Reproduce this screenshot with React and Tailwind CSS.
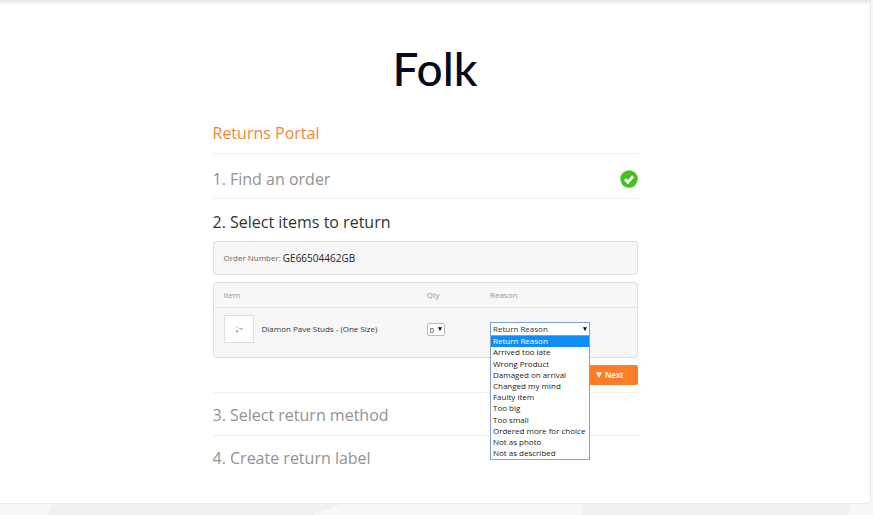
import React, { useState } from 'react';

const reasons = [
  'Return Reason',
  'Arrived too late',
  'Wrong Product',
  'Damaged on arrival',
  'Changed my mind',
  'Faulty item',
  'Too big',
  'Too small',
  'Ordered more for choice',
  'Not as photo',
  'Not as described',
];

function Caret({ className }) {
  return (
    <svg viewBox="0 0 6 6" className={className} aria-hidden="true">
      <path d="M0 0.3h6L3 6z" fill="currentColor" />
    </svg>
  );
}

function ReasonPicker() {
  const [reason, setReason] = useState(reasons[0]);
  return (
    <div className="relative w-[100px]">
      <select
        aria-label="Reason"
        value={reason}
        onChange={(e) => setReason(e.target.value)}
        className="block h-[14px] w-full appearance-none border border-[#7f9fdc] bg-white pl-[2px] text-[8px] leading-[12px] text-[#333]"
      >
        {reasons.map((r) => (
          <option key={r}>{r}</option>
        ))}
      </select>
      <Caret className="pointer-events-none absolute right-[3px] top-[5px] size-[4px] text-black" />
      <ul
        role="listbox"
        aria-label="Return reasons"
        className="absolute left-0 top-full z-10 grid h-[124px] w-full auto-rows-fr border border-t-0 border-[#8f9fc8] bg-white text-[8px] leading-[10px] text-[#222]"
      >
        {reasons.map((r) => (
          <li
            key={r}
            role="option"
            aria-selected={r === reason}
            onClick={() => setReason(r)}
            className="whitespace-nowrap pl-[2px] aria-selected:bg-[#0c8dfa] aria-selected:text-white"
          >
            {r}
          </li>
        ))}
      </ul>
    </div>
  );
}

export default function App() {
  return (
    <div className="min-h-screen bg-[#f8f8f8] font-['Open_Sans','Noto_Sans',sans-serif]">
      <main className="mr-[2px] rounded-br-sm border-b border-r border-[#ebebeb] bg-white">
        <div className="h-[5px] bg-gradient-to-b from-[#e6e6e6] to-white" />
        <header className="flex h-[108px] justify-center pt-8">
          <h1 className="font-['Lato','Open_Sans',sans-serif] text-[46px] font-medium leading-[64px] text-[#050a1c]">
            Folk
          </h1>
        </header>
        <div className="mx-auto w-full max-w-[445px] pb-[33px] pr-5 text-[16px] text-[#929292]">
          <h2 className="border-b border-[#f0f0f0] pb-2 pt-2 leading-6 text-[#f58634]">Returns Portal</h2>
          <section className="flex h-[45px] items-center justify-between border-b border-[#f0f0f0] pt-[6px]">
            <h3>1. Find an order</h3>
            <svg viewBox="0 0 18 18" className="size-[18px]" role="img" aria-label="Completed">
              <circle cx="9" cy="9" r="8.7" fill="#46c01f" />
              <path d="M5 9.2l2.8 2.9 5.4-5.8" fill="none" stroke="#fff" strokeWidth="2.8" />
            </svg>
          </section>
          <section className="border-b border-[#f0f0f0] pb-[7px] pt-[11px]">
            <h3 className="leading-6 text-[#333]">2. Select items to return</h3>
            <p className="mt-[7px] flex h-[34px] items-center gap-[2px] rounded-[3px] border border-[#dedede] bg-[#f7f7f7] pl-[10px] text-[8px] text-[#666]">
              Order Number: <strong className="text-[10px] font-normal text-[#222]">GE66504462GB</strong>
            </p>
            <div className="mt-[7px] rounded-[3px] border border-[#dedede] bg-[#f7f7f7]">
              <table className="w-full table-fixed text-left text-[8px] text-[#999]">
                <thead>
                  <tr className="h-[24px] border-b border-[#e2e2e2]">
                    <th className="w-[48%] pl-[10px] font-normal">Item</th>
                    <th className="w-[15%] pl-[10px] font-normal">Qty</th>
                    <th className="pl-[10px] font-normal">Reason</th>
                  </tr>
                </thead>
                <tbody>
                  <tr className="h-[50px]">
                    <td className="pb-[6px] pl-[10px] pt-0">
                      <div className="flex items-center gap-2">
                        <svg viewBox="0 0 30 28" className="h-[28px] w-[30px] border border-[#ddd] bg-white" role="img" aria-label="Diamond pave studs">
                          <path d="M11.5 11.5l2 .8M14.5 12.8l1.5.7" stroke="#bbb" strokeWidth="1" />
                          <path d="M16.5 14h2M12 16.5h2" stroke="#888" strokeWidth="1.8" />
                        </svg>
                        <span className="text-[#333]">Diamon Pave Studs - (One Size)</span>
                      </div>
                    </td>
                    <td className="pb-[6px] pl-[10px] pt-0">
                      <div className="relative w-[18px]">
                        <select
                          aria-label="Quantity"
                          className="block h-[13px] w-full appearance-none rounded-[2px] border border-[#bbb] bg-white pl-[2px] text-[8px] leading-[11px] text-[#333]"
                        >
                          <option>0</option>
                          <option>1</option>
                        </select>
                        <Caret className="pointer-events-none absolute right-[3px] top-[4px] size-[4px] text-black" />
                      </div>
                    </td>
                    <td className="pb-[6px] pl-[10px] pt-0">
                      <ReasonPicker />
                    </td>
                  </tr>
                </tbody>
              </table>
            </div>
            <div className="mt-[7px] flex justify-end">
              <button type="button" className="flex h-5 w-[60px] items-center justify-end gap-[3px] rounded-[2px] bg-[#fb7d27] pr-[14px] text-[8px] font-semibold text-white">
                <Caret className="size-[6px]" />
                Next
              </button>
            </div>
          </section>
          <section className="border-b border-[#f0f0f0] pb-2 pt-[10px]">
            <h3 className="leading-6">3. Select return method</h3>
          </section>
          <section className="pt-[10px]">
            <h3 className="leading-6">4. Create return label</h3>
          </section>
        </div>
      </main>
      <svg viewBox="0 0 873 12" preserveAspectRatio="none" className="block h-[12px] w-full" aria-hidden="true">
        <path d="M52 0H342L310 12H47z" fill="#f1f1f1" />
        <path d="M584 0H852L847 12H580z" fill="#f1f1f1" />
      </svg>
    </div>
  );
}
